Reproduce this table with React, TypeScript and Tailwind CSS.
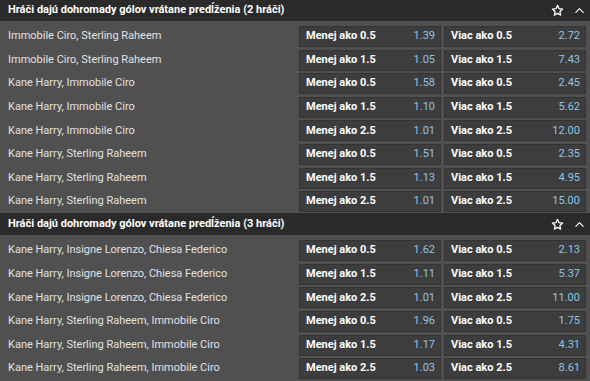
import React from 'react';

type Row = {
  players: string;
  line: string;
  under: string;
  over: string;
};

type Section = {
  title: string;
  rows: Row[];
};

const sections: Section[] = [
  {
    title: 'Hráči dajú dohromady gólov vrátane predĺženia (2 hráči)',
    rows: [
      { players: 'Immobile Ciro, Sterling Raheem', line: '0.5', under: '1.39', over: '2.72' },
      { players: 'Immobile Ciro, Sterling Raheem', line: '1.5', under: '1.05', over: '7.43' },
      { players: 'Kane Harry, Immobile Ciro', line: '0.5', under: '1.58', over: '2.45' },
      { players: 'Kane Harry, Immobile Ciro', line: '1.5', under: '1.10', over: '5.62' },
      { players: 'Kane Harry, Immobile Ciro', line: '2.5', under: '1.01', over: '12.00' },
      { players: 'Kane Harry, Sterling Raheem', line: '0.5', under: '1.51', over: '2.35' },
      { players: 'Kane Harry, Sterling Raheem', line: '1.5', under: '1.13', over: '4.95' },
      { players: 'Kane Harry, Sterling Raheem', line: '2.5', under: '1.01', over: '15.00' },
    ],
  },
  {
    title: 'Hráči dajú dohromady gólov vrátane predĺženia (3 hráči)',
    rows: [
      { players: 'Kane Harry, Insigne Lorenzo, Chiesa Federico', line: '0.5', under: '1.62', over: '2.13' },
      { players: 'Kane Harry, Insigne Lorenzo, Chiesa Federico', line: '1.5', under: '1.11', over: '5.37' },
      { players: 'Kane Harry, Insigne Lorenzo, Chiesa Federico', line: '2.5', under: '1.01', over: '11.00' },
      { players: 'Kane Harry, Sterling Raheem, Immobile Ciro', line: '0.5', under: '1.96', over: '1.75' },
      { players: 'Kane Harry, Sterling Raheem, Immobile Ciro', line: '1.5', under: '1.17', over: '4.31' },
      { players: 'Kane Harry, Sterling Raheem, Immobile Ciro', line: '2.5', under: '1.03', over: '8.61' },
    ],
  },
];

const StarIcon = () => (
  <svg width="13" height="13" viewBox="0 0 24 24" fill="none" stroke="currentColor" strokeWidth="2.4" strokeLinejoin="round">
    <path d="M12 2.5l2.9 6.2 6.6.7-5 4.5 1.4 6.6L12 17.2l-5.9 3.3 1.4-6.6-5-4.5 6.6-.7z" />
  </svg>
);

const ChevronUp = () => (
  <svg width="11" height="11" viewBox="0 0 24 24" fill="none" stroke="currentColor" strokeWidth="2.6" strokeLinecap="round" strokeLinejoin="round">
    <path d="M4 16l8-8 8 8" />
  </svg>
);

const OddButton = ({ label, odd }: { label: string; odd: string }) => (
  <button className="flex h-[21px] w-[142px] items-center justify-between border border-[#343434] bg-[#3d3d3d] pl-[6px] pr-[5px] text-[11px]">
    <span className="font-bold text-white">{label}</span>
    <span className="text-[#8ec3e6]">{odd}</span>
  </button>
);

const MarketSection = ({ section, first }: { section: Section; first: boolean }) => (
  <div>
    <div className={`flex items-center justify-between bg-[#2a2a2a] pl-2 pr-[5px] ${first ? 'h-[21px]' : 'h-[22px]'}`}>
      <span className="text-[11px] font-bold text-white">{section.title}</span>
      <div className="flex items-center gap-[10px] text-white">
        <StarIcon />
        <ChevronUp />
      </div>
    </div>
    <div className={`flex flex-col gap-[2.6px] ${first ? 'pt-[5px] pb-[1px]' : 'pt-[5px]'}`}>
      {section.rows.map((row, i) => (
        <div key={i} className="flex h-[21px] items-center pr-[4px]">
          <span className="flex-1 pl-2 text-[11px] text-[#e2e2e2]">{row.players}</span>
          <div className="flex gap-[3px]">
            <OddButton label={`Menej ako ${row.line}`} odd={row.under} />
            <OddButton label={`Viac ako ${row.line}`} odd={row.over} />
          </div>
        </div>
      ))}
    </div>
  </div>
);

export default function App() {
  return (
    <div className="h-[381px] w-[590px] overflow-hidden bg-[#505050]" style={{ fontFamily: 'Roboto, "Noto Sans", sans-serif' }}>
      {sections.map((s, i) => (
        <MarketSection key={i} section={s} first={i === 0} />
      ))}
    </div>
  );
}
